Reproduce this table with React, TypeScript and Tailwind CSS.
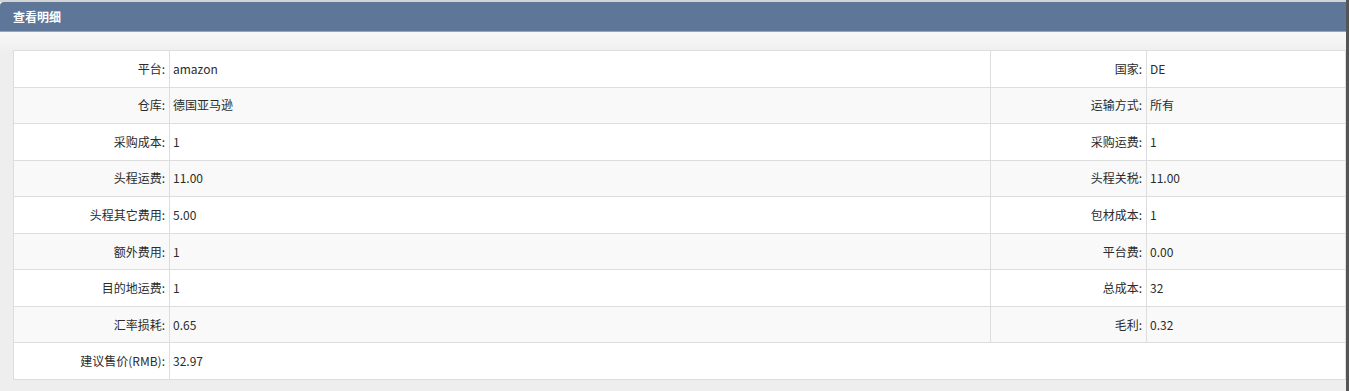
import React from "react";

interface Cell {
  label: string;
  value: string;
}

const rows: [Cell, Cell | null][] = [
  [{ label: "平台:", value: "amazon" }, { label: "国家:", value: "DE" }],
  [{ label: "仓库:", value: "德国亚马逊" }, { label: "运输方式:", value: "所有" }],
  [{ label: "采购成本:", value: "1" }, { label: "采购运费:", value: "1" }],
  [{ label: "头程运费:", value: "11.00" }, { label: "头程关税:", value: "11.00" }],
  [{ label: "头程其它费用:", value: "5.00" }, { label: "包材成本:", value: "1" }],
  [{ label: "额外费用:", value: "1" }, { label: "平台费:", value: "0.00" }],
  [{ label: "目的地运费:", value: "1" }, { label: "总成本:", value: "32" }],
  [{ label: "汇率损耗:", value: "0.65" }, { label: "毛利:", value: "0.32" }],
  [{ label: "建议售价(RMB):", value: "32.97" }, null],
];

export default function App() {
  return (
    <div
      className="flex w-full h-[391px] bg-[#eeeeee] text-[12px] text-[#2b2b2b]"
      style={{ fontFamily: '"Noto Sans CJK SC", "Noto Sans", sans-serif' }}
    >
      <div className="flex-1 flex flex-col">
        {/* Header */}
        <div className="border-t-2 border-[#d4d4d4] bg-white">
          <div className="h-[30px] bg-[#5e7799] rounded-tl-[4px] pl-[13px] flex items-center text-white font-bold border-b border-[#9aa5b4]">
            查看明细
          </div>
        </div>

        {/* Body */}
        <div className="flex-1 bg-gradient-to-b from-[#f8f8f8] to-[#eeeeee] from-0% to-[6%] pl-[13px] pt-[18px]">
          <table className="w-full border-collapse bg-white table-fixed">
            <colgroup>
              <col className="w-[156px]" />
              <col className="w-[821px]" />
              <col className="w-[156px]" />
              <col />
            </colgroup>
            <tbody>
              {rows.map(([a, b], i) => (
                <tr
                  key={i}
                  className={
                    i % 2 === 1
                      ? "h-[36.56px] bg-[#f9f9f9]"
                      : "h-[36.56px] bg-white"
                  }
                >
                  <td className="border border-[#dddddd] text-right pr-[4px]">
                    {a.label}
                  </td>
                  <td
                    className="border border-[#dddddd] pl-[3px]"
                    colSpan={b ? 1 : 3}
                  >
                    {a.value}
                  </td>
                  {b && (
                    <>
                      <td className="border border-[#dddddd] text-right pr-[4px]">
                        {b.label}
                      </td>
                      <td className="border border-[#dddddd] pl-[3px]">
                        {b.value}
                      </td>
                    </>
                  )}
                </tr>
              ))}
            </tbody>
          </table>
        </div>
      </div>
      <div className="w-[3px] bg-[#555555]" />
    </div>
  );
}
